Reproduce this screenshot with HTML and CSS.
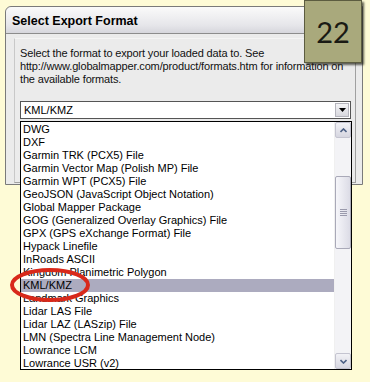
FILE: index.html
```html
<!DOCTYPE html>
<html lang="en">
<head>
    <meta charset="UTF-8">
    <title>Select Export Format</title>
    <link rel="stylesheet" href="styles.css">
</head>
<body>
    <div class="screen">
        <div class="dialog">
            <div class="titlebar">Select Export Format</div>
            <div class="dialog-body">
                <div class="panel">
                    <p class="desc">Select the format to export your loaded data to. See<br>http://www.globalmapper.com/product/formats.htm for information on<br>the available formats.</p>
                    <div class="combo">
                        <span class="combo-value">KML/KMZ</span>
                        <span class="combo-btn">
                            <svg width="7" height="4" viewBox="0 0 7 4"><path d="M0 0h7L3.5 4z" fill="#000"/></svg>
                        </span>
                    </div>
                </div>
            </div>
        </div>

        <!-- open dropdown of the combo, drawn over the dialog -->
        <div class="droplist">
            <ul class="items">
                <li>DWG</li>
                <li>DXF</li>
                <li>Garmin TRK (PCX5) File</li>
                <li>Garmin Vector Map (Polish MP) File</li>
                <li>Garmin WPT (PCX5) File</li>
                <li>GeoJSON (JavaScript Object Notation)</li>
                <li>Global Mapper Package</li>
                <li>GOG (Generalized Overlay Graphics) File</li>
                <li>GPX (GPS eXchange Format) File</li>
                <li>Hypack Linefile</li>
                <li>InRoads ASCII</li>
                <li>Kingdom Planimetric Polygon</li>
                <li class="selected">KML/KMZ</li>
                <li>Landmark Graphics</li>
                <li>Lidar LAS File</li>
                <li>Lidar LAZ (LASzip) File</li>
                <li>LMN (Spectra Line Management Node)</li>
                <li>Lowrance LCM</li>
                <li>Lowrance USR (v2)</li>
            </ul>
            <div class="scrollbar">
                <div class="sb-btn">
                    <svg width="7" height="5" viewBox="0 0 7 5"><path d="M0.5 4L3.5 1L6.5 4" fill="none" stroke="#4d6185" stroke-width="1.6"/></svg>
                </div>
                <div class="sb-track">
                    <div class="sb-thumb">
                        <span class="grip"></span><span class="grip"></span><span class="grip"></span><span class="grip"></span>
                    </div>
                </div>
                <div class="sb-btn">
                    <svg width="7" height="5" viewBox="0 0 7 5"><path d="M0.5 1L3.5 4L6.5 1" fill="none" stroke="#4d6185" stroke-width="1.6"/></svg>
                </div>
            </div>
        </div>

        <div class="badge">22</div>

        <svg class="ring" width="84" height="38" viewBox="0 0 84 38">
            <ellipse cx="42" cy="19" rx="38" ry="15" fill="none" stroke="#d8291b" stroke-width="4"/>
        </svg>
    </div>
</body>
</html>
```

FILE: styles.css
```css
body {
    margin: 0;
    background-color: #fefbd6;
    font-family: "Liberation Sans", Arial, sans-serif;
    font-size: 11px;
    color: #000;
}

.screen {
    position: relative;
    height: 382px;
    padding-top: 6px;
    box-sizing: border-box;
}

.dialog {
    margin-left: 5px;
    width: 358px;
    height: 179px;
    box-sizing: border-box;
    border: 1px solid #7a7a7a;
    border-radius: 6px 0 0 0;
    background-color: #ebebeb;
    display: flex;
    flex-direction: column;
}

.titlebar {
    height: 27px;
    box-sizing: border-box;
    padding: 7px 0 0 6px;
    font-weight: bold;
    font-size: 12.5px;
    border-radius: 6px 0 0 0;
    background: linear-gradient(#fafafa, #e6e6ea 70%, #d6d6dc);
    border-bottom: 1px solid #8c8c8c;
}

.dialog-body {
    flex: 1;
    padding: 4px 6px 1px 8px;
    display: flex;
}

.panel {
    flex: 1;
    border: 1px solid #a0a0a0;
    border-top-color: #f4f4f4;
    border-left-color: #c8c8c8;
    padding: 8px 4px 0 5px;
}

.desc {
    margin: 0;
    line-height: 13px;
    letter-spacing: -0.15px;
    white-space: nowrap;
    color: #111;
}

.combo {
    margin-top: 15px;
    height: 18px;
    box-sizing: border-box;
    border: 1px solid #555;
    background: #fff;
    display: flex;
    align-items: center;
    justify-content: space-between;
}

.combo-value {
    padding-left: 3px;
}

.combo-btn {
    width: 14px;
    height: 14px;
    margin-right: 1px;
    box-sizing: border-box;
    border: 1px solid #b5b5bd;
    background: linear-gradient(#f4f4f6, #d8d8de);
    display: flex;
    align-items: center;
    justify-content: center;
}

.droplist {
    position: absolute;
    top: 121px;
    left: 20px;
    width: 332px;
    height: 249px;
    box-sizing: border-box;
    border: 1px solid #000;
    background: #fff;
    display: flex;
}

.items {
    flex: 1;
    list-style: none;
    margin: 0;
    padding: 1px 0 0;
}

.items li {
    height: 13px;
    line-height: 13px;
    padding-left: 2px;
    white-space: nowrap;
}

.items li.selected {
    background-color: #acabbf;
}

.scrollbar {
    width: 16px;
    display: flex;
    flex-direction: column;
    background: #f3f3f6;
    border-left: 1px solid #f0f0f0;
}

.sb-btn {
    height: 16px;
    box-sizing: border-box;
    border: 1px solid #c4c4d0;
    border-radius: 2px;
    background: linear-gradient(#f2f2f6, #d6d6e0);
    display: flex;
    align-items: center;
    justify-content: center;
}

.sb-track {
    flex: 1;
    padding-top: 38px;
}

.sb-thumb {
    height: 73px;
    box-sizing: border-box;
    border: 1px solid #a9a9b8;
    border-radius: 2px;
    background: linear-gradient(90deg, #f6f6fa, #dcdce6);
    display: flex;
    flex-direction: column;
    align-items: center;
    justify-content: center;
    gap: 1px;
}

.grip {
    width: 7px;
    height: 1px;
    background: #9a9aac;
}

.badge {
    position: absolute;
    top: 0;
    left: 304px;
    width: 58px;
    height: 63px;
    box-sizing: border-box;
    border: 1px solid #5c5c40;
    background-color: #a9a97c;
    box-shadow: 2px 2px 2px rgba(30, 30, 20, 0.7);
    display: flex;
    align-items: center;
    justify-content: center;
    font-family: Lato, "Liberation Sans", sans-serif;
    font-size: 29px;
    color: #1a1a14;
}

.ring {
    position: absolute;
    left: 8px;
    top: 266px;
}
```
